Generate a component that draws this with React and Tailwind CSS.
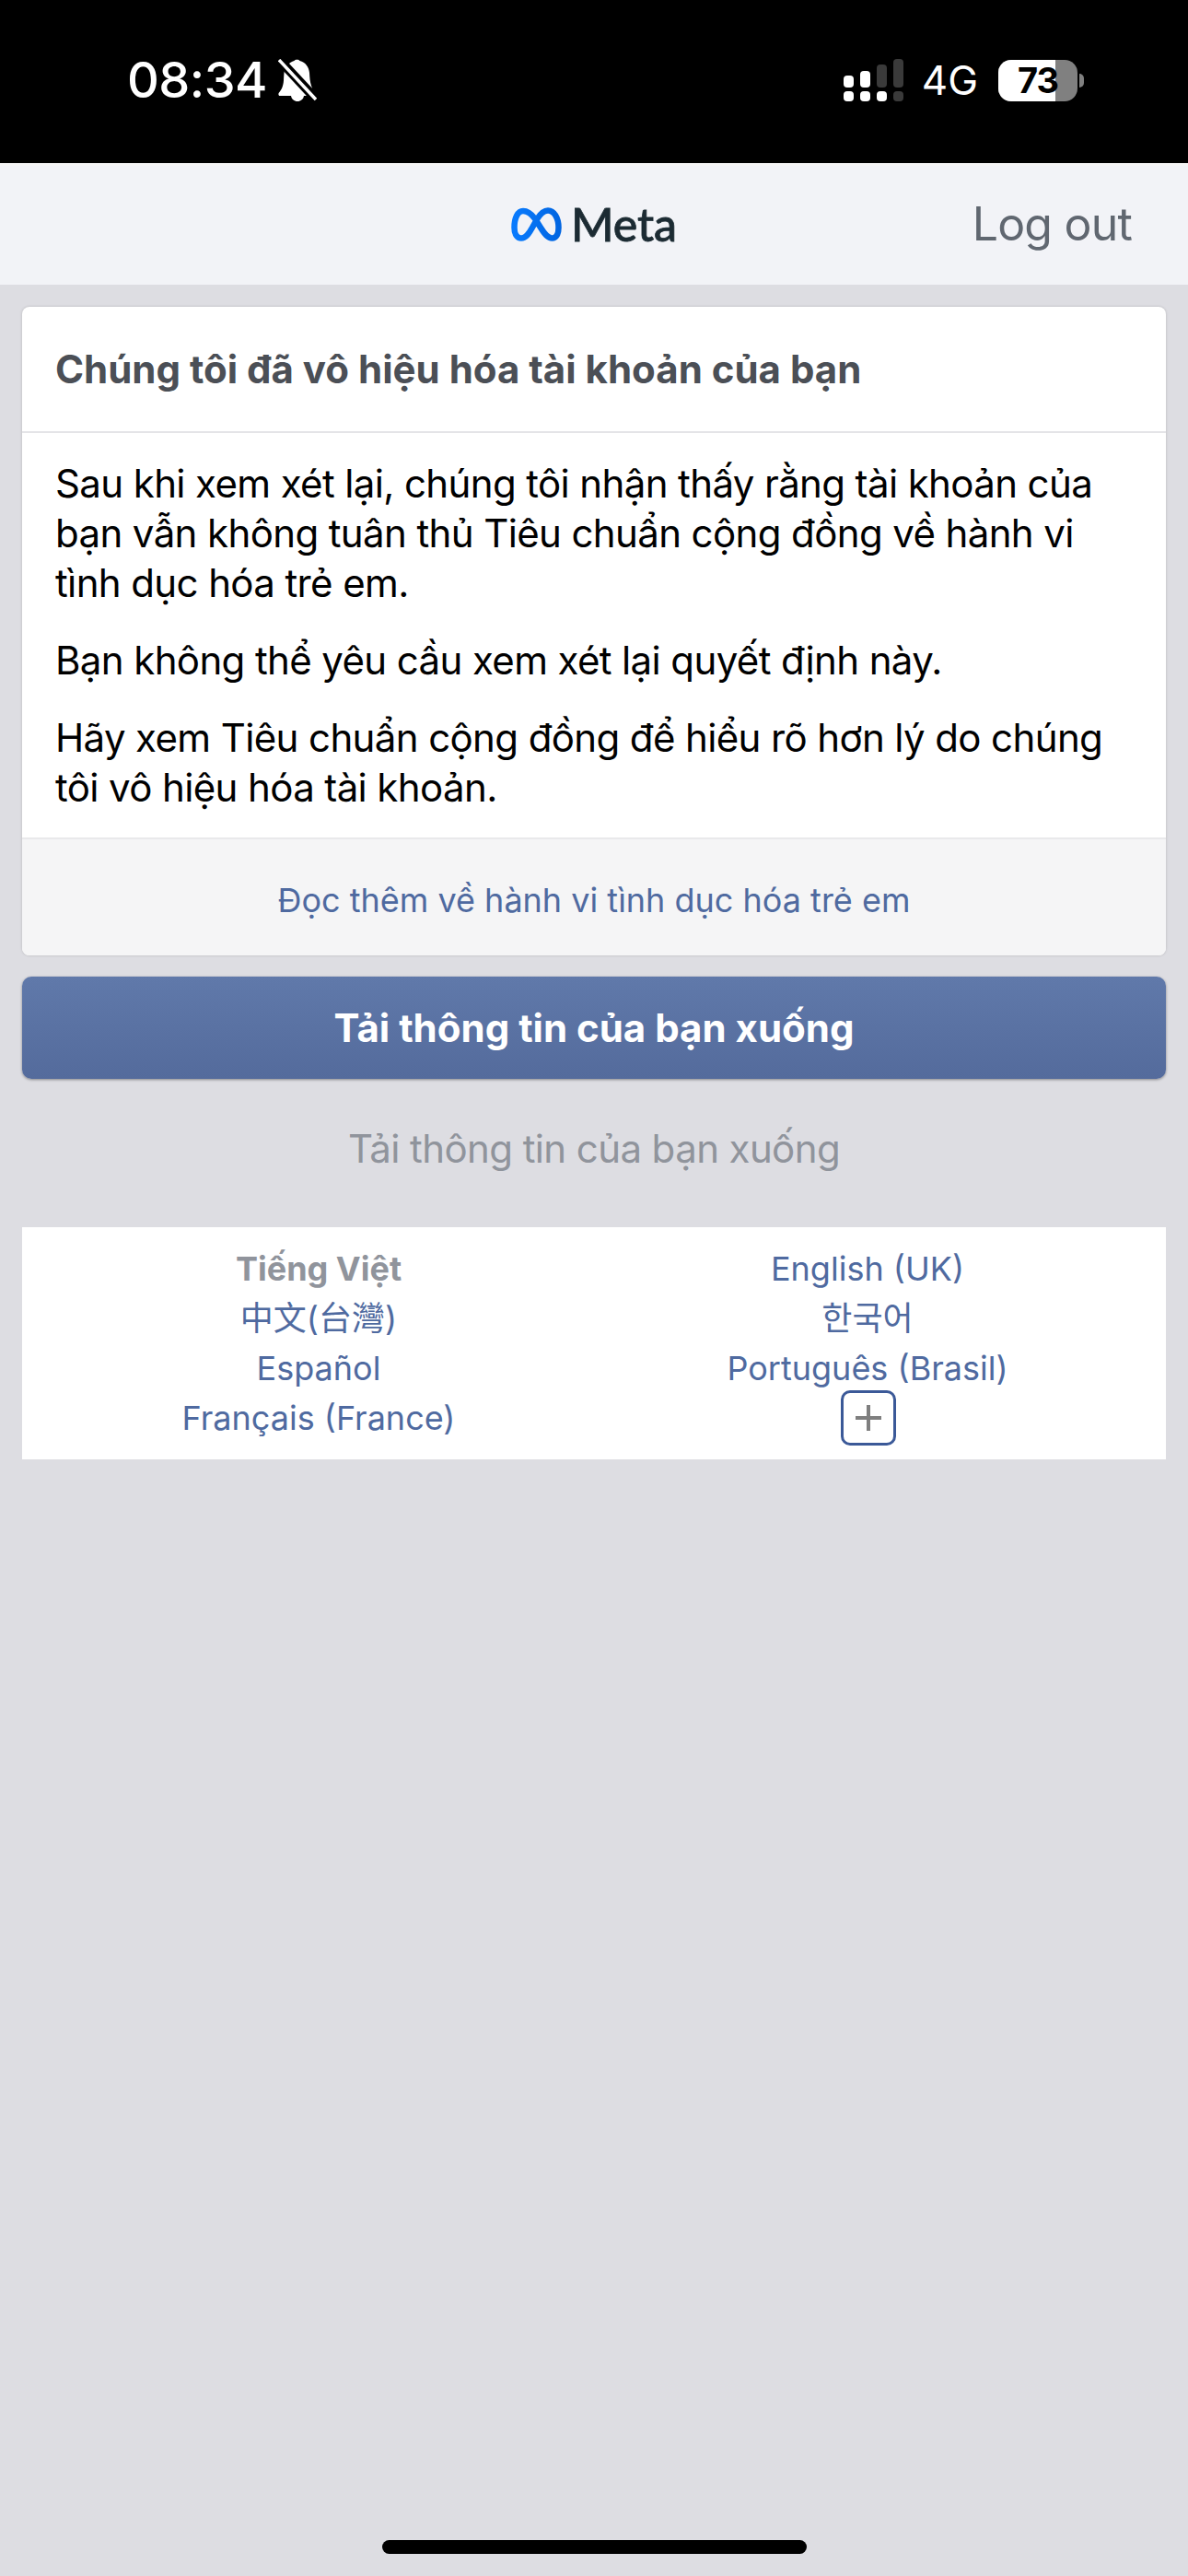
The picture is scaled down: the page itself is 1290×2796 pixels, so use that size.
const languages = [
  { label: 'Tiếng Việt', current: true },
  { label: 'English (UK)' },
  { label: '中文(台灣)' },
  { label: '한국어' },
  { label: 'Español' },
  { label: 'Português (Brasil)' },
  { label: 'Français (France)' },
];

const MetaLogo = () => (
  <svg width="55" height="37" viewBox="0 0 55 37" fill="none">
    <defs>
      <linearGradient id="metaGrad" x1="0" y1="0" x2="55" y2="0" gradientUnits="userSpaceOnUse">
        <stop offset="0" stopColor="#0a7cff" />
        <stop offset="1" stopColor="#0064e0" />
      </linearGradient>
    </defs>
    <path
      d="M13 4C7 4 3.500 12 3.500 22c0 7 3 11.500 7.500 11.500 4.500 0 7.500-3.500 12-11.500l5-9C32 6.500 35.500 3.500 40 3.500c6.500 0 11.500 8 11.500 18.500 0 7-2.500 11.500-7 11.500-4.500 0-7.500-3.500-12.500-11.500l-6-9.500C21.500 6.500 18 4 13 4z"
      stroke="url(#metaGrad)"
      strokeWidth="6.500"
      strokeLinejoin="round"
    />
  </svg>
);

const BellOff = () => (
  <svg width="42" height="46" viewBox="0 0 42 46">
    <path d="M7 11 35 40H2c-1.500 0-2.200-2-1-3.500 3-3.500 4.500-7 5-13 .2-4 .3-8 1-12.500z" fill="#fff" />
    <path d="M12 5c1.500-1.500 3.500-2.500 5.500-3 1-1.800 5-1.800 6 0 6 1.500 10 6.500 10.500 13 .3 5 .6 10 2 14 .3 1 .7 2 1.200 3z" fill="#fff" />
    <path d="M14 40h14c-.5 3.500-3.500 6-7 6s-6.500-2.500-7-6z" fill="#fff" />
    <path d="M1 2 40 44" stroke="#000" strokeWidth="8" />
    <path d="M1 1 41 44" stroke="#fff" strokeWidth="3.500" />
  </svg>
);

const Signal = () => (
  <svg width="65" height="46" viewBox="0 0 65 46">
    <rect x="0" y="18" width="11" height="13" rx="4" fill="#fff" />
    <rect x="18" y="13" width="11" height="18" rx="4" fill="#fff" />
    <rect x="36" y="6" width="11" height="25" rx="4" fill="#3a3a3a" />
    <rect x="54" y="0" width="11" height="31" rx="4" fill="#3a3a3a" />
    <rect x="0" y="35" width="11" height="11" rx="4" fill="#fff" />
    <rect x="18" y="35" width="11" height="11" rx="4" fill="#fff" />
    <rect x="36" y="35" width="11" height="11" rx="4" fill="#fff" />
    <rect x="54" y="35" width="11" height="11" rx="4" fill="#3a3a3a" />
  </svg>
);

const Battery = () => (
  <div className="flex items-center gap-[2px]">
    <div className="relative flex h-[45px] w-[86px] overflow-hidden rounded-[14px] bg-[#808080]">
      <div className="w-[62px] bg-white" />
      <span className="absolute inset-0 flex items-center justify-center text-[38px] font-bold leading-none tracking-[-1px] text-black">73</span>
    </div>
    <div className="h-[15px] w-[5px] rounded-r-full bg-[#808080]" />
  </div>
);

export default function App() {
  return (
    <div className="flex min-h-[2796px] flex-col bg-[#dddde2] font-['Inter','Noto_Sans_CJK_TC',sans-serif]">
      {/* status bar */}
      <div className="flex h-[177px] justify-between bg-black pl-[138px] pr-[113px] pt-[64px] text-white">
        <div className="flex h-[46px] items-center gap-[12px]">
          <span className="text-[54px] font-medium leading-none tracking-[-0.5px]">08:34</span>
          <BellOff />
        </div>
        <div className="flex h-[46px] items-center">
          <Signal />
          <span className="ml-[20px] mr-[22px] text-[44px] leading-none">4G</span>
          <Battery />
        </div>
      </div>

      {/* header */}
      <div className="relative flex h-[132px] items-center justify-center border-t-[3px] border-[#f5f5f5] bg-[#f2f3f7] pb-[3px]">
        <div className="flex items-center gap-[10px]">
          <MetaLogo />
          <span className="font-['Lato',sans-serif] text-[50px] font-medium leading-none text-[#1c2b33] [-webkit-text-stroke:0.8px_#1c2b33]">Meta</span>
        </div>
        <span className="absolute right-[61px] top-1/2 -translate-y-[27px] text-[50px] leading-none tracking-[-0.8px] text-[#606770]">Log out</span>
      </div>

      <div className="flex flex-col px-6 pt-6">
        {/* notice card */}
        <div className="overflow-hidden rounded-[8px] bg-white shadow-[0_0_3px_rgba(0,0,0,0.18)]">
          <div className="flex h-[137px] items-center border-b-2 border-[#e4e4e7] px-[36px]">
            <h1 className="text-[42px] font-bold leading-none text-[#4b4f56]">Chúng tôi đã vô hiệu hóa tài khoản của bạn</h1>
          </div>
          <div className="flex flex-col gap-[30px] px-[36px] pb-[27px] pt-[28px] text-[42px] leading-[54px] tracking-[-0.62px] text-black">
            <p>Sau khi xem xét lại, chúng tôi nhận thấy rằng tài khoản của bạn vẫn không tuân thủ Tiêu chuẩn cộng đồng về hành vi tình dục hóa trẻ em.</p>
            <p>Bạn không thể yêu cầu xem xét lại quyết định này.</p>
            <p>Hãy xem Tiêu chuẩn cộng đồng để hiểu rõ hơn lý do chúng tôi vô hiệu hóa tài khoản.</p>
          </div>
          <div className="flex h-[128px] items-center justify-center border-t-2 border-[#e9e9eb] bg-[#f5f5f6] pt-[6px] text-[36px] text-[#4f6aa0]">
            Đọc thêm về hành vi tình dục hóa trẻ em
          </div>
        </div>

        <button className="mt-[23px] flex h-[111px] items-center justify-center rounded-[10px] bg-gradient-to-b from-[#6079aa] to-[#546b9c] text-[42px] font-bold text-white shadow-[0_1px_3px_rgba(0,0,0,0.4)]">
          Tải thông tin của bạn xuống
        </button>

        <div className="mt-[49px] text-center text-[42px] leading-[54px] tracking-[-0.6px] text-[#90949c]">Tải thông tin của bạn xuống</div>

        {/* language picker */}
        <div className="mt-[58px] grid h-[252px] grid-cols-2 content-start bg-white pl-6 pr-[26px] pt-[18px] text-center text-[36px] leading-[54px] text-[#4f6aa0]">
          {languages.map((lang) => (
            <div key={lang.label} className={lang.current ? 'font-bold text-[#90949c]' : ''}>{lang.label}</div>
          ))}
          <div className="flex h-[54px] items-center justify-center pl-[2px]">
            <div className="flex h-[60px] w-[60px] items-center justify-center rounded-[10px] border-[3px] border-[#3b5998]">
              <svg width="30" height="30" viewBox="0 0 30 30">
                <path d="M15 1v28M1 15h28" stroke="#7f7f7f" strokeWidth="4" />
              </svg>
            </div>
          </div>
        </div>
      </div>

      {/* home indicator */}
      <div className="mt-auto flex justify-center pb-[24px]">
        <div className="h-[15px] w-[461px] rounded-full bg-black" />
      </div>
    </div>
  );
}
